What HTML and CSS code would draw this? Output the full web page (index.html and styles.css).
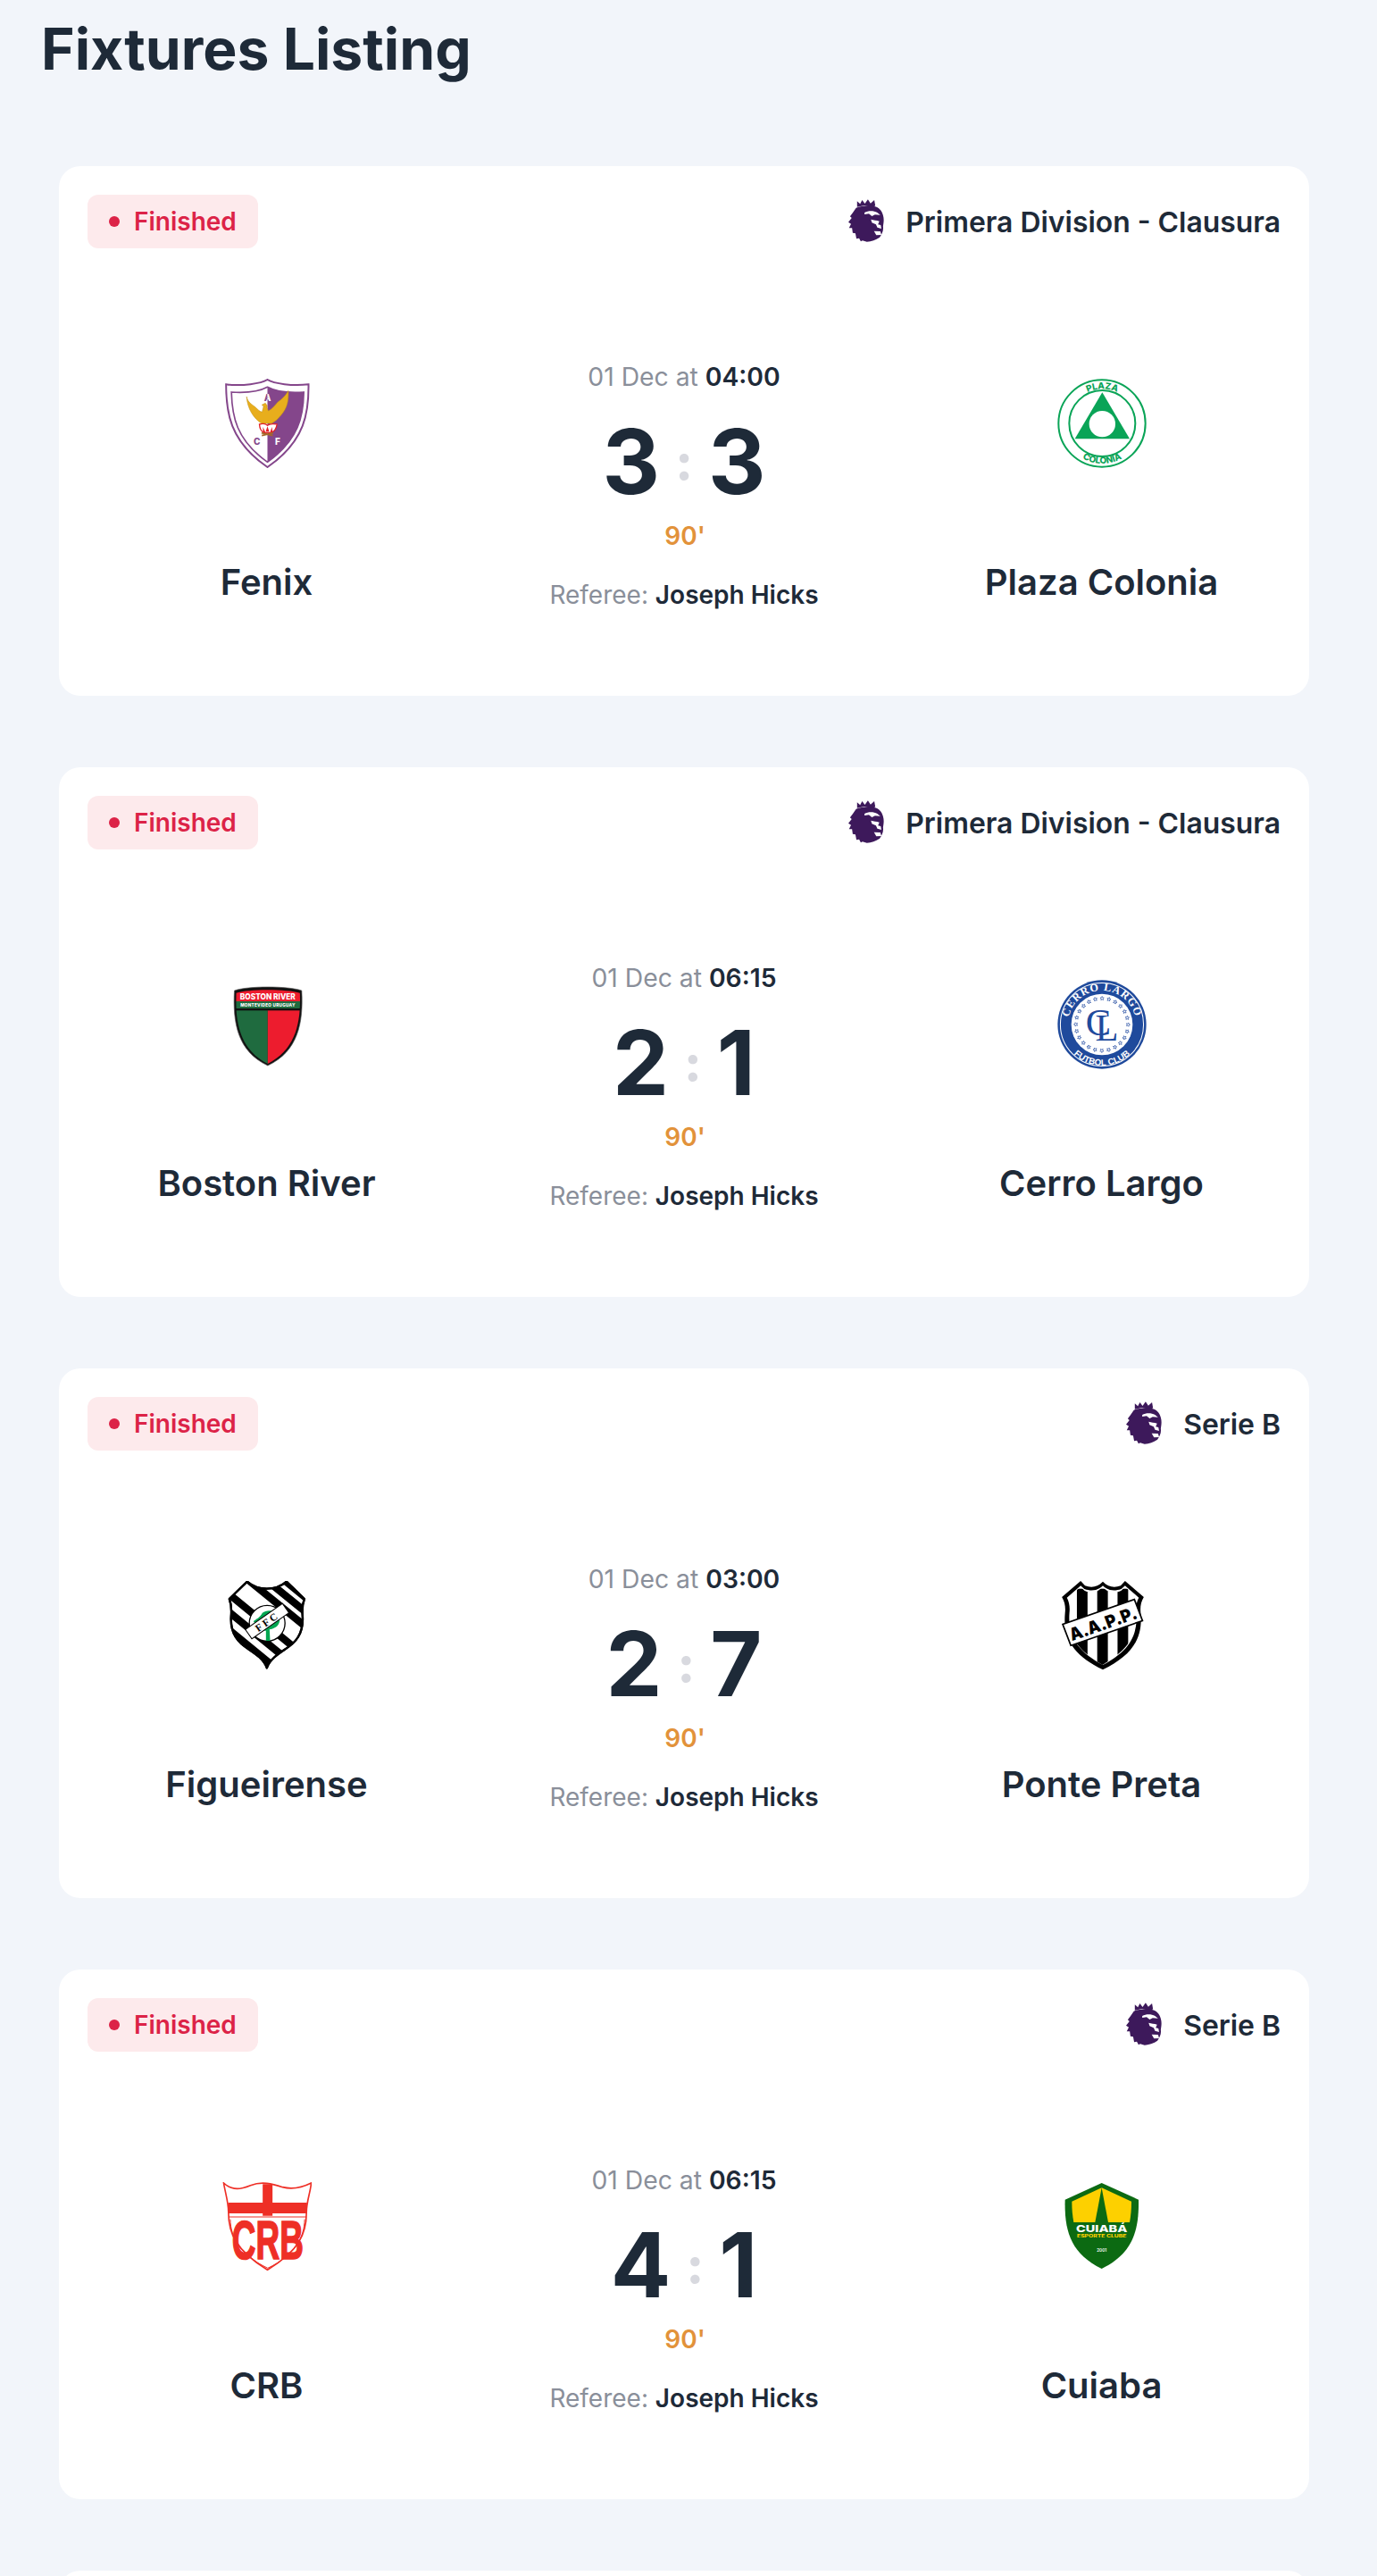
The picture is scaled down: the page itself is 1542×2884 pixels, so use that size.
FILE: index.html
```html
<!DOCTYPE html>
<html lang="en">
<head>
<meta charset="utf-8">
<title>Fixtures Listing</title>
<link rel="stylesheet" href="styles.css">
</head>
<body>
<svg class="defs" width="0" height="0" aria-hidden="true">
  <defs>
    <symbol id="lion" viewBox="47 39 106 150" preserveAspectRatio="none">
      <path fill="#3d195b" d="M73 46l9 9 6-13 8 12 9-14 8 13 11-11 3 19-8 6-24-7-22 5z"/>
      <path fill="#3d195b" d="M70 68c14-7 38-10 54-5 14 4 22 14 26 30 4 14 1 28 0 38 2 12-3 26-10 36-12 9-24 14-38 15l-13-4-5 3-5-11-8 2-3-18-8-2-2-16-9 0 6-14-8-6 10-14-5-5 8-12z"/>
      <path fill="#fff" d="M95 84c11-7 27-7 38 0l9 8-16-1-9 5-9-8-13 2z"/>
      <path fill="#fff" d="M114 107c8 3 17 2 25 6l-4 11 8 2 2 12-12-4-4-10-12-6z"/>
      <path fill="#fff" d="M123 146l19 1 3 12-15 1z"/>
    </symbol>
    <symbol id="star" viewBox="0 0 10 10">
      <path fill="none" stroke="#3f63ad" stroke-width="1.5" d="M5 .8l1.2 2.9 3.1.3-2.4 2 .8 3-2.7-1.6-2.7 1.6.8-3-2.4-2 3.1-.3z"/>
    </symbol>
  </defs>
</svg>

<main class="page">
  <h1 class="title">Fixtures Listing</h1>
  <div class="list">

    <article class="card">
      <header class="card-top">
        <span class="badge"><i class="dot"></i>Finished</span>
        <span class="league"><svg class="lion"><use href="#lion"/></svg>Primera Division - Clausura</span>
      </header>
      <div class="match">
        <div class="team">
          <svg class="crest" viewBox="55.5 42 300 300">
            <defs>
              <clipPath id="fxl"><rect x="0" y="0" width="207" height="400"/></clipPath>
              <clipPath id="fxr"><rect x="207" y="0" width="200" height="400"/></clipPath>
            </defs>
            <path fill="#fff" stroke="#84468b" stroke-width="6" d="M207 45c-22 14-85 22-139 16 0 90 10 190 139 278C336 251 346 151 345 61c-54 6-116-2-138-16z"/>
            <path fill="#fff" stroke="#84468b" stroke-width="5" d="M207 70c-25 14-72 20-121 17 2 80 15 160 121 235 106-75 121-155 122-235-49 3-97-3-122-17z"/>
            <path fill="#84468b" d="M207 70c25 14 73 20 122 17-1 80-16 160-122 235z"/>
            <g font-family="Inter, sans-serif" font-weight="800" font-size="30" text-anchor="middle">
              <text x="207" y="116" fill="#84468b" clip-path="url(#fxl)">A</text>
              <text x="207" y="116" fill="#fff" clip-path="url(#fxr)">A</text>
              <text x="172" y="263" fill="#84468b">C</text>
              <text x="241" y="263" fill="#fff">F</text>
            </g>
            <path fill="#e8ae1c" stroke="#c08f12" stroke-width="1.5" d="M137 102c4 20 18 26 30 36 8 8 14 14 22 16l3-12 2-8-6-4 12-6 6 8 0 8 4 10c12-6 20-16 32-30 14-10 26-20 35-38 2 34-4 60-24 82-10 12-20 22-32 28h-34c-26-16-48-50-50-90z"/>
            <path fill="#fff" stroke="#e21f26" stroke-width="4" d="M180 195c12-3 20-4 27 4 8-8 18-6 32-4-2 14-10 26-22 28h-22c-9-4-14-14-15-28z"/>
            <path fill="#e21f26" d="M207 202l6 18h-12zM192 204l8 18h-8zM222 204l-6 18h8z"/>
            <path stroke="#a5682a" stroke-width="5" d="M187 224l38 9M226 224l-38 9"/>
          </svg>
          <h2 class="team-name">Fenix</h2>
        </div>
        <div class="mid">
          <p class="date">01 Dec at <b>04:00</b></p>
          <div class="score"><span>3</span><em>:</em><span>3</span></div>
          <p class="minute">90'</p>
          <p class="ref">Referee: <b>Joseph Hicks</b></p>
        </div>
        <div class="team">
          <svg class="crest" viewBox="39 42 300 300">
            <defs>
              <path id="plz1" d="M74 192a116 116 0 0 1 232 0"/>
              <path id="plz2" d="M55 192a135 135 0 0 0 270 0"/>
            </defs>
            <circle cx="189" cy="192" r="146" fill="#fff" stroke="#0aa457" stroke-width="6"/>
            <circle cx="190" cy="192" r="111" fill="#fff" stroke="#0aa457" stroke-width="6"/>
            <path fill="#0aa457" d="M190 88l92 156H98z"/>
            <circle cx="190" cy="194" r="44" fill="#fff"/>
            <g font-family="Inter, sans-serif" font-weight="800" font-size="30" fill="#0aa457" text-anchor="middle">
              <text><textPath href="#plz1" startOffset="50%">PLAZA</textPath></text>
              <text><textPath href="#plz2" startOffset="50%">COLONIA</textPath></text>
            </g>
          </svg>
          <h2 class="team-name">Plaza Colonia</h2>
        </div>
      </div>
    </article>

    <article class="card">
      <header class="card-top">
        <span class="badge"><i class="dot"></i>Finished</span>
        <span class="league"><svg class="lion"><use href="#lion"/></svg>Primera Division - Clausura</span>
      </header>
      <div class="match">
        <div class="team">
          <svg class="crest" viewBox="55.5 36 300 300">
            <defs>
              <clipPath id="bri"><path d="M102 80c40-14 170-14 214 0 4 100-14 190-108 238C114 270 98 180 102 80z"/></clipPath>
            </defs>
            <path fill="#111" stroke="#555" stroke-width="2" d="M96 72c44-16 180-16 226 0 6 108-12 204-114 252C106 276 90 180 96 72z"/>
            <g clip-path="url(#bri)">
              <rect x="90" y="60" width="240" height="48" fill="#ed1c2e"/>
              <rect x="90" y="108" width="240" height="24" fill="#1f6b3f"/>
              <rect x="90" y="132" width="240" height="7" fill="#111"/>
              <rect x="90" y="139" width="118" height="190" fill="#1f6b3f"/>
              <rect x="208" y="139" width="120" height="190" fill="#ed1c2e"/>
            </g>
            <text class="crest-text" x="208" y="103" fill="#fff" font-size="27" font-weight="800" text-anchor="middle" textLength="186" lengthAdjust="spacingAndGlyphs">BOSTON RIVER</text>
            <text class="crest-text" x="208" y="126" fill="#fff" font-size="14" font-weight="800" text-anchor="middle" textLength="184" lengthAdjust="spacing">MONTEVIDEO URUGUAY</text>
          </svg>
          <h2 class="team-name">Boston River</h2>
        </div>
        <div class="mid">
          <p class="date">01 Dec at <b>06:15</b></p>
          <div class="score"><span>2</span><em>:</em><span>1</span></div>
          <p class="minute">90'</p>
          <p class="ref">Referee: <b>Joseph Hicks</b></p>
        </div>
        <div class="team">
          <svg class="crest" viewBox="39 36 300 300">
            <defs>
              <path id="cl1" d="M78 190a112 112 0 0 1 224 0"/>
              <path id="cl2" d="M55 190a135 135 0 0 0 270 0"/>
            </defs>
            <g transform="translate(189 186) scale(1.02) translate(-190 -190)">
              <circle cx="190" cy="190" r="146" fill="#1f4a9c"/>
              <circle cx="190" cy="190" r="137" fill="none" stroke="#fff" stroke-width="3"/>
              <circle cx="190" cy="190" r="101" fill="#fff"/>
              <use href="#star" x="183" y="96" width="15" height="15"/>
              <use href="#star" x="183" y="96" width="15" height="15" transform="rotate(15 190 190)"/>
              <use href="#star" x="183" y="96" width="15" height="15" transform="rotate(30 190 190)"/>
              <use href="#star" x="183" y="96" width="15" height="15" transform="rotate(45 190 190)"/>
              <use href="#star" x="183" y="96" width="15" height="15" transform="rotate(60 190 190)"/>
              <use href="#star" x="183" y="96" width="15" height="15" transform="rotate(75 190 190)"/>
              <use href="#star" x="183" y="96" width="15" height="15" transform="rotate(90 190 190)"/>
              <use href="#star" x="183" y="96" width="15" height="15" transform="rotate(105 190 190)"/>
              <use href="#star" x="183" y="96" width="15" height="15" transform="rotate(120 190 190)"/>
              <use href="#star" x="183" y="96" width="15" height="15" transform="rotate(135 190 190)"/>
              <use href="#star" x="183" y="96" width="15" height="15" transform="rotate(150 190 190)"/>
              <use href="#star" x="183" y="96" width="15" height="15" transform="rotate(165 190 190)"/>
              <use href="#star" x="183" y="96" width="15" height="15" transform="rotate(180 190 190)"/>
              <use href="#star" x="183" y="96" width="15" height="15" transform="rotate(195 190 190)"/>
              <use href="#star" x="183" y="96" width="15" height="15" transform="rotate(210 190 190)"/>
              <use href="#star" x="183" y="96" width="15" height="15" transform="rotate(225 190 190)"/>
              <use href="#star" x="183" y="96" width="15" height="15" transform="rotate(240 190 190)"/>
              <use href="#star" x="183" y="96" width="15" height="15" transform="rotate(255 190 190)"/>
              <use href="#star" x="183" y="96" width="15" height="15" transform="rotate(270 190 190)"/>
              <use href="#star" x="183" y="96" width="15" height="15" transform="rotate(285 190 190)"/>
              <use href="#star" x="183" y="96" width="15" height="15" transform="rotate(300 190 190)"/>
              <use href="#star" x="183" y="96" width="15" height="15" transform="rotate(315 190 190)"/>
              <use href="#star" x="183" y="96" width="15" height="15" transform="rotate(330 190 190)"/>
              <use href="#star" x="183" y="96" width="15" height="15" transform="rotate(345 190 190)"/>
              <g font-family="'Liberation Serif', serif" fill="#1f4a9c" font-size="125">
                <text x="136" y="224">C</text>
                <text x="168" y="242">L</text>
              </g>
              <g fill="#fff" text-anchor="middle">
                <text font-family="'Liberation Serif', serif" font-weight="700" font-size="36" letter-spacing="3"><textPath href="#cl1" startOffset="50%">CERRO LARGO</textPath></text>
                <text font-family="'Liberation Sans', sans-serif" font-weight="700" font-size="29"><textPath href="#cl2" startOffset="50%">FUTBOL CLUB</textPath></text>
              </g>
            </g>
          </svg>
          <h2 class="team-name">Cerro Largo</h2>
        </div>
      </div>
    </article>

    <article class="card">
      <header class="card-top">
        <span class="badge"><i class="dot"></i>Finished</span>
        <span class="league"><svg class="lion"><use href="#lion"/></svg>Serie B</span>
      </header>
      <div class="match">
        <div class="team">
          <svg class="crest" viewBox="55.5 30 300 300">
            <defs>
              <clipPath id="fig"><path d="M139 32c18 16 42 24 66 24s48-8 66-24l60 58c-6 16-8 34-6 58 4 60-24 90-60 112-24 16-50 34-60 62-10-28-36-46-60-62-36-22-64-52-60-112 2-24 0-42-6-58z"/></clipPath>
            </defs>
            <path fill="#fff" stroke="#000" stroke-width="7" stroke-linejoin="round" d="M139 32c18 16 42 24 66 24s48-8 66-24l60 58c-6 16-8 34-6 58 4 60-24 90-60 112-24 16-50 34-60 62-10-28-36-46-60-62-36-22-64-52-60-112 2-24 0-42-6-58z"/>
            <g clip-path="url(#fig)" stroke="#000" stroke-width="25">
              <path d="M60 60l260 212M60 120l260 212M60 180l220 180M110 0l260 212M170 0l210 170M230 0l150 122"/>
            </g>
            <path fill="none" stroke="#000" stroke-width="7" stroke-linejoin="round" d="M139 32c18 16 42 24 66 24s48-8 66-24l60 58c-6 16-8 34-6 58 4 60-24 90-60 112-24 16-50 34-60 62-10-28-36-46-60-62-36-22-64-52-60-112 2-24 0-42-6-58z"/>
            <circle cx="206" cy="172" r="60" fill="#fff" stroke="#000" stroke-width="4"/>
            <path fill="#00a651" d="M160 165c10-8 22-12 30-28 10-8 26-10 40-4 10 6 20 14 18 30-2 16-12 24-26 28l-8 2 2 38h-14l0-34c-18 0-30-10-42-32z"/>
            <g transform="rotate(-35 206 165)">
              <rect x="130" y="146" width="152" height="38" fill="#fff" stroke="#000" stroke-width="3"/>
              <text class="crest-serif" x="206" y="178" font-size="34" font-weight="700" text-anchor="middle" letter-spacing="8">FFC</text>
            </g>
          </svg>
          <h2 class="team-name">Figueirense</h2>
        </div>
        <div class="mid">
          <p class="date">01 Dec at <b>03:00</b></p>
          <div class="score"><span>2</span><em>:</em><span>7</span></div>
          <p class="minute">90'</p>
          <p class="ref">Referee: <b>Joseph Hicks</b></p>
        </div>
        <div class="team">
          <svg class="crest" viewBox="39 30 300 300">
            <defs>
              <clipPath id="pon"><path d="M119 50l12 12c20 10 38 10 58-12 20 22 40 22 60 12l12-12 40 36c-8 16-8 32-6 52 6 84-34 130-106 174-72-44-112-90-106-174 2-20 2-36-6-52z"/></clipPath>
            </defs>
            <g transform="translate(192 0) scale(1.05 1) translate(-190 0)">
              <path fill="#000" d="M119 30l14 16c22 8 40 4 57-14 17 18 35 22 57 14l14-16 60 54c-10 18-12 34-10 54 8 92-34 144-121 190C103 282 61 230 69 138c2-20 0-36-10-54z"/>
              <path fill="#fff" d="M119 46l12 11c22 8 42 6 59-11 17 17 37 19 59 11l12-11 44 40c-8 16-10 32-8 52 6 84-32 132-107 174-75-42-113-90-107-174 2-20 0-36-8-52z"/>
              <g clip-path="url(#pon)">
                <rect x="107" y="56" width="34" height="260"/>
                <rect x="172" y="56" width="34" height="270"/>
                <rect x="237" y="56" width="34" height="260"/>
              </g>
              <g transform="rotate(-20 188 172)">
                <rect x="68" y="132" width="244" height="76" fill="#fff" stroke="#000" stroke-width="5"/>
                <text class="crest-text" x="190" y="195" font-size="58" font-weight="900" text-anchor="middle" textLength="226" lengthAdjust="spacingAndGlyphs">A.A.P.P.</text>
              </g>
            </g>
          </svg>
          <h2 class="team-name">Ponte Preta</h2>
        </div>
      </div>
    </article>

    <article class="card">
      <header class="card-top">
        <span class="badge"><i class="dot"></i>Finished</span>
        <span class="league"><svg class="lion"><use href="#lion"/></svg>Serie B</span>
      </header>
      <div class="match">
        <div class="team">
          <svg class="crest" viewBox="55.5 39 300 300">
            <path fill="#fff" stroke="#ee2f26" stroke-width="5" d="M60 42c30 28 60 20 90 8 38-14 72-6 108 6 32 8 60 4 96-14-2 30-16 60-16 100 0 70-24 126-131 192C100 268 76 210 76 140c0-34-12-70-16-98z"/>
            <path fill="#ee2f26" d="M191 46h33v62h116l-2 36H224v8h-33v-8H76l-1-36h116z"/>
            <path fill="none" stroke="#ee2f26" stroke-width="3" d="M77 156h261"/>
            <path fill="none" stroke="#ee2f26" stroke-width="3" d="M82 164c2 60 30 118 126 164 96-46 122-104 124-164"/>
            <text class="crest-impact" x="208" y="298" fill="#ee2f26" stroke="#ee2f26" stroke-width="5" font-size="186" font-weight="700" text-anchor="middle" textLength="240" lengthAdjust="spacingAndGlyphs">CRB</text>
          </svg>
          <h2 class="team-name">CRB</h2>
        </div>
        <div class="mid">
          <p class="date">01 Dec at <b>06:15</b></p>
          <div class="score"><span>4</span><em>:</em><span>1</span></div>
          <p class="minute">90'</p>
          <p class="ref">Referee: <b>Joseph Hicks</b></p>
        </div>
        <div class="team">
          <svg class="crest" viewBox="39 39 300 300">
            <path fill="#0c6a12" d="M188 42l124 56c2 108-22 182-124 232C86 280 62 206 65 98z"/>
            <path fill="#fdd000" d="M188 58l-100 46c0 26 2 48 6 70h72z"/>
            <path fill="#fdd000" d="M188 58l100 46c0 26-2 48-6 70h-72z"/>
            <text class="crest-text" x="188" y="207" fill="#fff" font-size="33" font-weight="800" text-anchor="middle" textLength="172" lengthAdjust="spacingAndGlyphs">CUIABÁ</text>
            <text class="crest-text" x="188" y="226" fill="#fdd000" font-size="13" font-weight="800" text-anchor="middle" textLength="166" lengthAdjust="spacingAndGlyphs">ESPORTE CLUBE</text>
            <text class="crest-text" x="188" y="273" fill="#fff" font-size="14" font-weight="600" text-anchor="middle">2001</text>
          </svg>
          <h2 class="team-name">Cuiaba</h2>
        </div>
      </div>
    </article>

    <article class="card card-blank"></article>
  </div>
</main>
</body>
</html>
```

FILE: styles.css
```css
html, body {
  margin: 0;
  padding: 0;
  height: 2884px;
  overflow: hidden;
  background: #f2f5fa;
}

body {
  font-family: Inter, "Noto Sans", sans-serif;
  color: #1e2a38;
}

.defs {
  display: block;
  height: 0;
}

.page {
  padding: 16px 0 0 46px;
}

.title {
  margin: 0 0 92px;
  font-size: 64.2px;
  line-height: 78px;
  font-weight: 700;
}

.list {
  display: flex;
  flex-direction: column;
  gap: 80px;
  width: 1400px;
  margin-left: 20px;
}

.card {
  box-sizing: border-box;
  background: #fff;
  border-radius: 24px;
  padding: 32px;
}

.card-blank {
  height: 593px;
}

.card-top {
  display: flex;
  justify-content: space-between;
  align-items: center;
  height: 60px;
}

.badge {
  display: inline-flex;
  align-items: center;
  gap: 16px;
  height: 60px;
  padding: 0 24px;
  border-radius: 12px;
  background: #fdeaec;
  color: #dc2347;
  font-size: 28px;
  font-weight: 600;
}

.dot {
  width: 12px;
  height: 12px;
  border-radius: 50%;
  background: #dc2347;
}

.league {
  display: inline-flex;
  align-items: center;
  gap: 24px;
  font-size: 31.9px;
  font-weight: 600;
}

.lion {
  display: block;
  width: 40px;
  height: 50px;
}

.match {
  display: grid;
  grid-template-columns: 401px 1fr 401px;
  margin-top: 125px;
  padding-bottom: 64px;
}

.team {
  display: flex;
  flex-direction: column;
  align-items: center;
  padding-top: 21px;
}

.crest {
  display: block;
  width: 100px;
  height: 100px;
}

.crest-text {
  font-family: Inter, sans-serif;
}

.crest-serif {
  font-family: "Liberation Serif", serif;
}

.crest-impact {
  font-family: "Liberation Sans", sans-serif;
}

.team-name {
  margin: 104px 0 0;
  font-size: 40px;
  line-height: 48px;
  font-weight: 600;
}

.mid {
  display: flex;
  flex-direction: column;
  align-items: center;
  padding-top: 2px;
}

.date,
.ref {
  margin: 0;
  line-height: 34px;
  font-weight: 400;
  color: #8a8f9a;
}

.date {
  font-size: 28.3px;
}

.ref {
  margin-top: 32px;
  font-size: 28px;
}

.date b,
.ref b {
  font-weight: 600;
  color: #1e2a38;
}

.score {
  display: flex;
  align-items: center;
  justify-content: center;
  gap: 17px;
  margin-top: 23px;
  font-size: 100px;
  line-height: 110px;
  font-weight: 700;
}

.score em {
  font-style: normal;
  font-size: 56px;
  font-weight: 800;
  line-height: 110px;
  color: #d8d9df;
}

.minute {
  margin: 11px 0 0;
  padding-left: 2px;
  font-size: 28px;
  line-height: 34px;
  font-weight: 600;
  color: #e2923a;
}
```
